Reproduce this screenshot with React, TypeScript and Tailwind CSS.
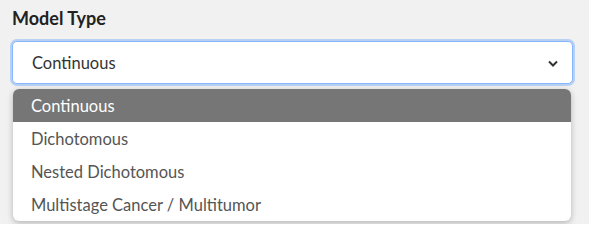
import React from 'react';

const OPTIONS = ['Continuous', 'Dichotomous', 'Nested Dichotomous', 'Multistage Cancer / Multitumor'];

export default function App() {
  const selected = 'Continuous';

  return (
    <div
      className="w-[589px] h-[224px] bg-[#f1f1f1] px-[12px] pt-[6px] overflow-hidden"
      style={{ fontFamily: '"Source Sans Pro", Lato, "Noto Sans", sans-serif' }}
    >
      <label className="block text-[18px] font-bold text-[#222] leading-[24px]">Model Type</label>

      <div className="relative mt-[11px] w-[561px]">
        <div className="flex items-center h-[43px] rounded-[5px] border border-[#86b7fe] bg-white pl-[19px] pr-[12px] pt-[1px] shadow-[0_0_0_2px_rgba(13,110,253,0.25)]">
          <span className="flex-1 text-[16.5px] text-[#333]">{selected}</span>
          <svg width="10" height="7" viewBox="0 0 10 7" className="mr-[2px]">
            <path d="M1 1.5 L5 5.5 L9 1.5" fill="none" stroke="#333" strokeWidth="2" />
          </svg>
        </div>

        <ul className="absolute left-[1px] top-[48px] w-[558px] rounded-[6px] bg-white overflow-hidden shadow-[0_2px_6px_rgba(0,0,0,0.25)]">
          {OPTIONS.map((o) => (
            <li
              key={o}
              className={
                o === selected
                  ? 'h-[33px] flex items-center pl-[18px] pt-[2px] text-[16.5px] bg-[#767676] text-white'
                  : 'h-[33px] flex items-center pl-[18px] pt-[2px] text-[16.5px] text-[#555]'
              }
            >
              {o}
            </li>
          ))}
        </ul>
      </div>
    </div>
  );
}
